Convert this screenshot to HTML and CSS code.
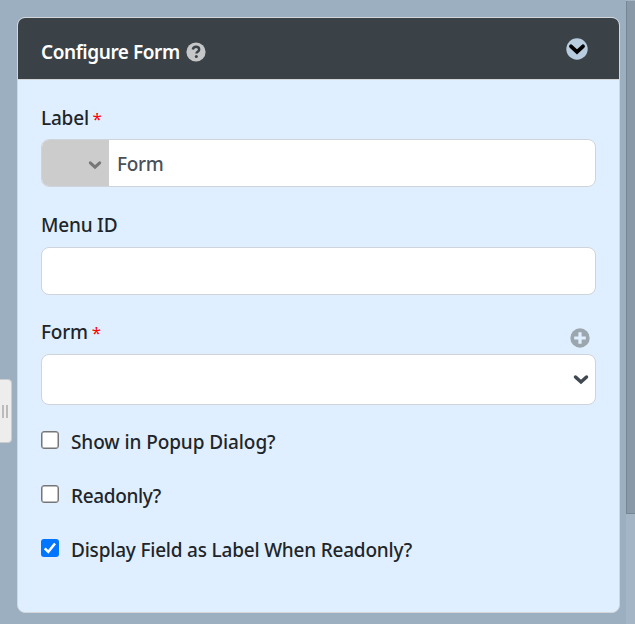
FILE: index.html
```html
<!DOCTYPE html>
<html lang="en">
<head>
<meta charset="utf-8">
<title>Configure Form</title>
<link rel="stylesheet" href="styles.css">
</head>
<body>
<div class="workspace">
  <section class="panel">
    <header class="panel-header">
      <h1 class="title">Configure Form</h1>
      <svg class="help" viewBox="0 0 20 20"><circle cx="10" cy="10" r="9.6" fill="#c4c6c8"/><path d="M6.8 7.4C7.2 5.6 8.5 4.8 10 4.8c1.9 0 3.2 1.1 3.2 2.7 0 2.2-2.8 2.3-2.8 4.1" fill="none" stroke="#3a4147" stroke-width="2.4"/><circle cx="10.3" cy="14.5" r="1.5" fill="#3a4147"/></svg>
      <svg class="collapse" viewBox="0 0 22 22"><circle cx="11" cy="11" r="10.7" fill="#b8cce0"/><path d="M5 8.300l6 5.600 6-5.600" fill="none" stroke="#000" stroke-width="3.8" stroke-linecap="round"/></svg>
    </header>
    <form class="panel-body">
      <div class="field">
        <div class="label-row"><label>Label <span class="required">*</span></label></div>
        <div class="control">
          <div class="icon-picker"><svg class="picker-arrow" viewBox="0 0 14 10"><path d="M2.300 2.800l4.700 4.400 4.700-4.400" fill="none" stroke="#777" stroke-width="3" stroke-linecap="round"/></svg></div>
          <span class="value">Form</span>
        </div>
      </div>
      <div class="field">
        <div class="label-row"><label>Menu ID</label></div>
        <div class="control"></div>
      </div>
      <div class="field">
        <div class="label-row"><label>Form <span class="required">*</span></label>
          <svg class="add" viewBox="0 0 20 20"><circle cx="10" cy="10" r="9.7" fill="#9ca6af"/><path d="M10 4.200v11.600M4.200 10h11.600" stroke="#e0efff" stroke-width="3.2"/></svg>
        </div>
        <div class="control select"><svg class="select-arrow" viewBox="0 0 16 12"><path d="M2.5 3l5.5 5 5.5-5" fill="none" stroke="#404852" stroke-width="3.5" stroke-linecap="round"/></svg></div>
      </div>
      <div class="checks">
        <div class="check"><span class="box"></span><span class="check-text popup">Show in Popup Dialog?</span></div>
        <div class="check"><span class="box"></span><span class="check-text readonly">Readonly?</span></div>
        <div class="check"><span class="box checked"><svg viewBox="0 0 18 18"><path d="M3.800 9.300l3.500 3.600 6.700-8.400" fill="none" stroke="#fff" stroke-width="2.500"/></svg></span><span class="check-text display">Display Field as Label When Readonly?</span></div>
      </div>
    </form>
  </section>
  <div class="scrollbar"><div class="thumb"></div></div>
  <div class="drawer-handle"></div>
</div>
</body>
</html>
```

FILE: styles.css
```css
* { box-sizing: border-box; }
body { margin: 0; font: 500 19px/28px "Noto Sans", sans-serif; color: #212529; }
svg { display: block; flex: none; }
.workspace { position: relative; display: flex; justify-content: space-between; width: 635px; height: 624px; padding-left: 17px; background: #9bafc1; overflow: hidden; }
.panel { width: 603px; height: 596px; margin-top: 17px; border: 1px solid #d3d7da; border-radius: 8px; background: #e0efff; overflow: hidden; }
.panel-header { display: flex; align-items: center; height: 62px; padding: 7px 31px 0 23px; border-bottom: 1px solid #d3d7da; background: #3a4147; }
.title { width: 139px; margin: 0; color: #fff; font-size: 19px; font-weight: 600; letter-spacing: -0.43px; white-space: nowrap; }
.help { width: 20px; height: 20px; margin-left: 6px; }
.collapse { width: 22px; height: 22px; margin: -7px 0 0 auto; }
.panel-body { padding: 0 23px; }
.field { padding-top: 24px; }
.label-row { display: flex; justify-content: space-between; height: 35px; letter-spacing: -0.2px; white-space: nowrap; }
.field + .field .label-row { height: 36px; }
.field:nth-child(3) { padding-top: 23px; }
.required { color: #f00; margin-left: -1px; font-size: 17px; font-weight: 400; }
.control { display: flex; height: 48px; border: 1px solid #ced4da; border-radius: 8px; background: #fff; overflow: hidden; }
.icon-picker { display: flex; align-items: center; justify-content: flex-end; width: 67px; padding: 4px 7px 0 0; background: #ccc; }
.picker-arrow { width: 14px; height: 10px; }
.value { padding: 10px 0 0 8px; color: #495057; letter-spacing: -0.3px; }
.add { width: 20px; height: 20px; margin: 10px 6px 0 0; }
.select { height: 51px; align-items: center; justify-content: flex-end; padding-right: 6px; }
.select-arrow { width: 16px; height: 12px; }
.checks { padding-top: 23px; }
.check { display: flex; height: 54px; white-space: nowrap; }
.box { flex: none; width: 18px; height: 18px; margin-top: 3px; border: 1.5px solid #767676; border-radius: 3px; background: #fff; box-shadow: inset 0 0 0 0.5px #767676; }
.checked { border: 0; background: #0075ff; box-shadow: none; }
.check-text { margin-left: 12px; letter-spacing: -0.2px; }
.popup { letter-spacing: -0.09px; }
.readonly { letter-spacing: -0.35px; }
.scrollbar { width: 9px; background: #a4b6c5; }
.thumb { height: 513px; margin-top: 1px; border: solid #758794; border-width: 0 0 1px 1px; background: #8999a7; }
.drawer-handle { position: absolute; left: -1px; top: 379px; width: 13px; height: 64px; border: 1px solid #ccc; border-radius: 0 4px 4px 0; background: linear-gradient(#bbb, #bbb) 2px 25px / 2px 13px no-repeat, linear-gradient(#bbb, #bbb) 6px 25px / 2px 13px no-repeat, #ededed; }
```
